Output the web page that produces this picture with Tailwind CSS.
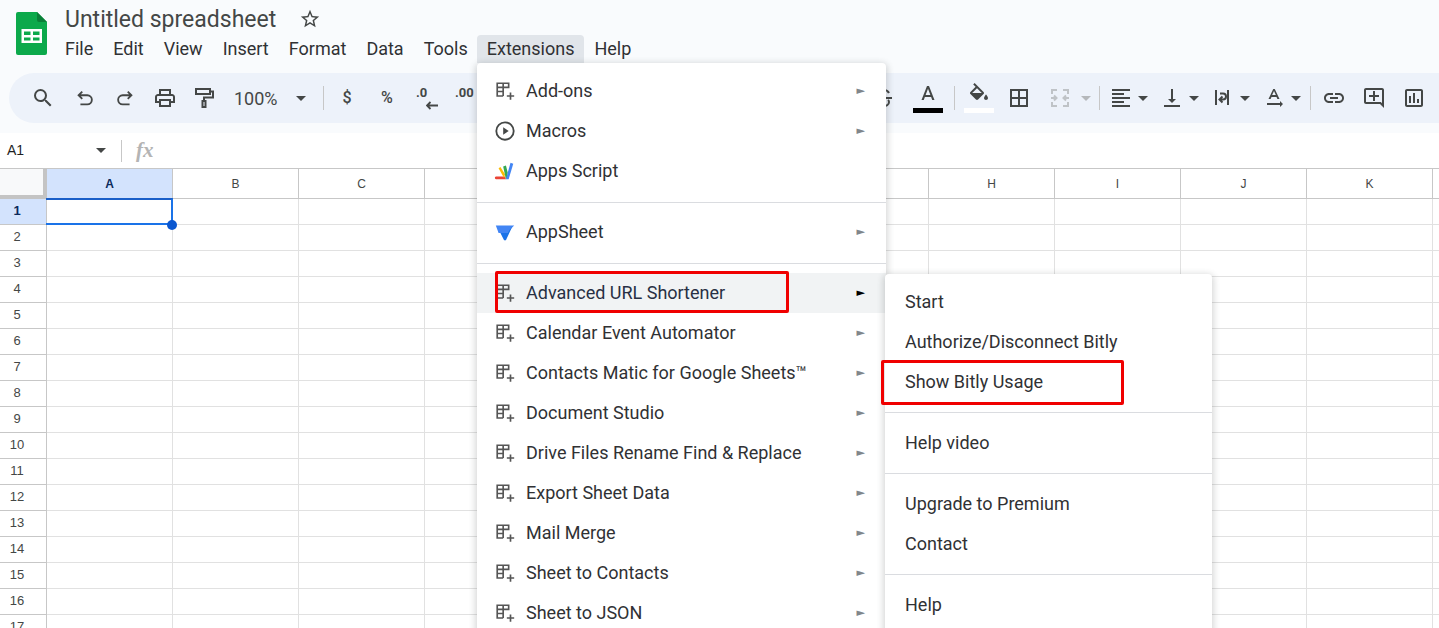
<!DOCTYPE html>
<html lang="en">
<head>
<meta charset="UTF-8">
<title>Untitled spreadsheet</title>
<script src="https://cdn.jsdelivr.net/npm/@tailwindcss/browser@4"></script>
</head>
<body class="bg-white">
<div class="relative w-[1439px] h-[628px] overflow-hidden font-['Roboto',sans-serif] text-[#1f1f1f]">

  <!-- header -->
  <div class="bg-[#f9fbfd] h-[133px]">
    <div class="flex h-[73px]">
      <svg class="ml-[16px] mt-[12px] shrink-0" width="31" height="43" viewBox="0 0 31 43">
        <path d="M2 0h19l10 10v31a2 2 0 0 1-2 2H2a2 2 0 0 1-2-2V2a2 2 0 0 1 2-2z" fill="#0ca94b"/>
        <path d="M21 0l10 10h-8a2 2 0 0 1-2-2z" fill="#0a7f38"/>
        <path d="M5.500 17h20.500v14H5.500z M8 19.500v3.500h6.500v-3.500z M17 19.500v3.500h6.500v-3.500z M8 25.500v3h6.500v-3z M17 25.500v3h6.500v-3z" fill="#fff" fill-rule="evenodd"/>
      </svg>
      <div class="ml-[18px]">
        <div class="flex items-center h-[38px]">
          <span class="text-[23px] text-[#444746] leading-none">Untitled spreadsheet</span>
          <svg class="ml-[23px]" width="22" height="22" viewBox="0 0 24 24" fill="#444746"><path d="M22 9.240l-7.190-.62L12 2 9.190 8.630 2 9.240l5.460 4.730L5.820 21 12 17.270 18.180 21l-1.630-7.030L22 9.240zM12 15.400l-3.760 2.270 1-4.280-3.320-2.880 4.380-.38L12 6.100l1.710 4.040 4.380.38-3.320 2.880 1 4.280L12 15.400z"/></svg>
        </div>
        <div class="flex h-[28px] -mt-[3px] pb-[2px] items-center text-[18px] text-[#303134] relative -left-[10px]">
          <span class="px-[10px]">File</span>
          <span class="px-[10px]">Edit</span>
          <span class="px-[10px]">View</span>
          <span class="px-[10px]">Insert</span>
          <span class="px-[10px]">Format</span>
          <span class="px-[10px]">Data</span>
          <span class="pl-[10px] pr-[9px]">Tools</span>
          <span class="self-start px-[10px] h-[28px] leading-[27px] bg-[#e1e5ea] rounded-t-[4px]">Extensions</span>
          <span class="px-[10px]">Help</span>
        </div>
      </div>
    </div>

    <!-- toolbar -->
    <div class="ml-[9px] h-[50px] bg-[#edf2fa] rounded-l-[25px] flex items-center text-[#444746]">
      <div class="flex items-center pl-[14px]">
        <div class="w-[40px] flex justify-center"><svg width="24" height="24" viewBox="0 0 24 24" fill="#444746"><path d="M15.500 14h-.79l-.28-.27A6.471 6.471 0 0 0 16 9.500 6.500 6.500 0 1 0 9.500 16c1.610 0 3.090-.59 4.230-1.570l.27.28v.79l5 4.990L20.490 19l-4.990-5zm-6 0C7.010 14 5 11.990 5 9.500S7.010 5 9.500 5 14 7.010 14 9.500 11.990 14 9.500 14z"/></svg></div>
        <div class="w-[40px] ml-[2px] flex justify-center"><svg width="22" height="22" viewBox="0 0 24 24" fill="none" stroke="#444746" stroke-width="2"><path d="M9 5L5 9l4 4M5 9h9.500a5 5 0 0 1 0 10H7"/></svg></div>
        <div class="w-[40px] flex justify-center"><svg width="22" height="22" viewBox="0 0 24 24" fill="none" stroke="#444746" stroke-width="2"><path d="M15 5l4 4-4 4M19 9H9.500a5 5 0 0 0 0 10H17"/></svg></div>
        <div class="w-[39px] flex justify-center"><svg width="24" height="24" viewBox="0 0 24 24" fill="#444746"><path d="M19 8h-1V3H6v5H5c-1.660 0-3 1.340-3 3v6h4v4h12v-4h4v-6c0-1.660-1.340-3-3-3zM8 5h8v3H8V5zm8 12v2H8v-4h8v2zm2-2v-2H6v2H4v-4c0-.55.45-1 1-1h14c.55 0 1 .45 1 1v4h-2z"/></svg></div>
        <div class="w-[39px] flex justify-center"><svg width="24" height="24" viewBox="0 0 24 24" fill="none" stroke="#444746" stroke-width="2"><rect x="4" y="3" width="14" height="5"/><path d="M18 5.500h3v6h-9V15"/><rect x="10.500" y="15" width="3" height="6"/></svg></div>
        <span class="ml-[11px] w-[46px] text-[18px] pt-[1px]">100%</span>
        <svg class="ml-[16px]" width="10" height="5" viewBox="0 0 10 5" fill="#444746"><path d="M0 0h10L5 5z"/></svg>
        <div class="ml-[17px] w-px h-[24px] bg-[#c7c7c7]"></div>
        <div class="ml-[3px] w-[40px] text-center text-[16px] font-medium">$</div>
        <div class="w-[40px] text-center text-[16px] font-medium">%</div>
        <div class="w-[39px] relative h-[30px] text-center">
          <span class="absolute left-[9px] top-[0px] text-[13px] font-bold">.0</span>
          <svg class="absolute left-[19px] top-[18px]" width="12" height="9" viewBox="0 0 12 9" fill="none" stroke="#444746" stroke-width="1.800"><path d="M4.500 1L1 4.500 4.500 8M1.500 4.500H12"/></svg>
        </div>
        <div class="w-[40px] relative h-[30px] text-center">
          <span class="absolute left-[9px] top-[0px] text-[13px] font-bold">.00</span>
        </div>
      </div>

      <div class="flex-1"></div>

      <div class="flex items-center pr-[5px]">
        <svg width="24" height="24" viewBox="0 0 24 24" fill="none" stroke="#444746" stroke-width="2"><path d="M17 7c-1-2-3-3-5-3S7 5 7 8c0 1 .5 2 1.500 2.500M4 12h16M16 14c.7.6 1 1.200 1 2 0 3-3 4-5 4s-4-1-5-3"/></svg>
        <div class="ml-[17px] relative w-[30px] h-[30px] flex justify-center">
          <svg width="24" height="24" viewBox="0 0 24 24" fill="#444746"><path d="M11 3L5.500 17h2.250l1.120-3h6.250l1.120 3h2.250L13 3h-2zm-1.380 9L12 5.670 14.380 12H9.620z"/></svg>
          <div class="absolute left-0 bottom-[0px] w-[30px] h-[5px] bg-black"></div>
        </div>
        <div class="ml-[11px] w-px h-[24px] bg-[#c7c7c7]"></div>
        <div class="ml-[9px] relative w-[30px] h-[30px] flex justify-center">
          <svg width="24" height="24" viewBox="0 0 24 24" fill="#444746"><path d="M16.560 8.940L7.620 0 6.210 1.410l2.380 2.380-5.150 5.150c-.59.59-.59 1.540 0 2.120l5.500 5.500c.29.29.68.44 1.060.44s.77-.15 1.060-.44l5.500-5.500c.59-.58.59-1.530 0-2.120zM5.210 10L10 5.210 14.790 10H5.210zM19 11.500s-2 2.170-2 3.500c0 1.100.9 2 2 2s2-.9 2-2c0-1.330-2-3.500-2-3.500z"/><path d="M4.500 10h11l-5.500 6z"/></svg>
          <div class="absolute left-0 bottom-[0px] w-[30px] h-[5px] bg-white"></div>
        </div>
        <svg class="ml-[13px]" width="24" height="24" viewBox="0 0 24 24" fill="#444746"><path d="M3 3v18h18V3H3zm8 16H5v-6h6v6zm0-8H5V5h6v6zm8 8h-6v-6h6v6zm0-8h-6V5h6v6z"/></svg>
        <svg class="ml-[17px]" width="24" height="24" viewBox="0 0 24 24" fill="none" stroke="#bfc3c7" stroke-width="2"><path d="M4 8V4h5M15 4h5v4M4 16v4h5M15 20h5v-4M3 12h5M6 9.500L8.500 12 6 14.500M21 12h-5M18 9.500L15.500 12l2.500 2.500"/></svg>
        <svg class="ml-[9px]" width="10" height="5" viewBox="0 0 10 5" fill="#b5b8bb"><path d="M0 0h10L5 5z"/></svg>
        <div class="ml-[8px] w-px h-[24px] bg-[#c7c7c7]"></div>
        <svg class="ml-[9px]" width="24" height="24" viewBox="0 0 24 24" fill="#444746"><path d="M3 3h18v2H3zM3 7h12v2H3zM3 11h18v2H3zM3 15h12v2H3zM3 19h18v2H3z"/></svg>
        <svg class="ml-[5px]" width="10" height="5" viewBox="0 0 10 5" fill="#444746"><path d="M0 0h10L5 5z"/></svg>
        <svg class="ml-[12px]" width="24" height="24" viewBox="0 0 24 24" fill="#444746"><path d="M16 13h-3V3h-2v10H8l4 4 4-4zM4 19v2h16v-2H4z"/></svg>
        <svg class="ml-[5px]" width="10" height="5" viewBox="0 0 10 5" fill="#444746"><path d="M0 0h10L5 5z"/></svg>
        <svg class="ml-[11px]" width="24" height="24" viewBox="0 0 24 24" fill="none" stroke="#444746" stroke-width="2"><path d="M6 4v15M18 4v15M10 7.500h3a3 3 0 0 1 0 6h-3M12.500 10.500l-3 3 3 3"/></svg>
        <svg class="ml-[6px]" width="10" height="5" viewBox="0 0 10 5" fill="#444746"><path d="M0 0h10L5 5z"/></svg>
        <svg class="ml-[12px]" width="24" height="24" viewBox="0 0 24 24" fill="#444746"><path d="M21 18l-3-3v2H5v2h13v2l3-3zM9.500 11h5l.9 2h2.100L12.750 3h-1.500L6.500 13h2.100l.9-2zm2.500-5.980L13.870 9h-3.740L12 5.020z"/></svg>
        <svg class="ml-[5px]" width="10" height="5" viewBox="0 0 10 5" fill="#444746"><path d="M0 0h10L5 5z"/></svg>
        <div class="ml-[9px] w-px h-[24px] bg-[#c7c7c7]"></div>
        <div class="ml-[3px] w-[40px] flex justify-center"><svg width="24" height="24" viewBox="0 0 24 24" fill="#444746"><path d="M3.900 12c0-1.710 1.390-3.100 3.100-3.100h4V7H7c-2.760 0-5 2.240-5 5s2.240 5 5 5h4v-1.900H7c-1.710 0-3.100-1.390-3.100-3.100zM8 13h8v-2H8v2zm9-6h-4v1.900h4c1.710 0 3.100 1.390 3.100 3.100s-1.390 3.100-3.100 3.100h-4V17h4c2.760 0 5-2.240 5-5s-2.240-5-5-5z"/></svg></div>
        <div class="w-[40px] flex justify-center"><svg width="24" height="24" viewBox="0 0 24 24" fill="#444746"><path d="M22 4c0-1.100-.9-2-2-2H4c-1.100 0-2 .9-2 2v12c0 1.100.9 2 2 2h14l4 4V4zm-2 13.170L18.830 16H4V4h16v13.170zM13 5h-2v4H7v2h4v4h2v-4h4V9h-4z"/></svg></div>
        <div class="w-[40px] flex justify-center"><svg width="24" height="24" viewBox="0 0 24 24" fill="#444746"><path d="M9 17H7v-7h2v7zm4 0h-2V7h2v10zm4 0h-2v-4h2v4zm2 2H5V5h14v14zm0-16H5c-1.100 0-2 .9-2 2v14c0 1.100.9 2 2 2h14c1.100 0 2-.9 2-2V5c0-1.100-.9-2-2-2z"/></svg></div>
      </div>
    </div>
  </div>

  <!-- name box and formula bar -->
  <div class="h-[35px] flex items-center bg-white font-['Liberation_Sans',sans-serif]">
    <span class="ml-[7px] w-[89px] text-[14px] text-[#1f1f1f]">A1</span>
    <svg width="10" height="5" viewBox="0 0 10 5" fill="#444746"><path d="M0 0h10L5 5z"/></svg>
    <div class="ml-[15px] w-px h-[22px] bg-[#c7c7c7]"></div>
    <span class="ml-[14px] font-['Liberation_Serif',serif] italic font-bold text-[21px] text-[#b4b4b4]">fx</span>
  </div>

  <!-- column headers, D to G sit under the menu -->
  <div class="flex h-[31px] border-t border-[#c7c7c7] font-['Liberation_Sans',sans-serif] text-[12px] text-[#444746]">
    <div class="w-[47px] shrink-0 bg-[#f8f9fa] border-r-[4px] border-b-[4px] border-[#c4c4c4]"></div>
    <div class="w-[126px] shrink-0 bg-[#d3e3fd] border-r border-b border-[#c7c7c7] flex items-center justify-center font-bold text-[#0b2a5c]">A</div>
    <div class="w-[126px] shrink-0 border-r border-b border-[#c7c7c7] flex items-center justify-center">B</div>
    <div class="w-[126px] shrink-0 border-r border-b border-[#c7c7c7] flex items-center justify-center">C</div>
    <div class="w-[126px] shrink-0 border-r border-b border-[#c7c7c7]"></div>
    <div class="w-[126px] shrink-0 border-r border-b border-[#c7c7c7]"></div>
    <div class="w-[126px] shrink-0 border-r border-b border-[#c7c7c7]"></div>
    <div class="w-[126px] shrink-0 border-r border-b border-[#c7c7c7]"></div>
    <div class="w-[126px] shrink-0 border-r border-b border-[#c7c7c7] flex items-center justify-center">H</div>
    <div class="w-[126px] shrink-0 border-r border-b border-[#c7c7c7] flex items-center justify-center">I</div>
    <div class="w-[126px] shrink-0 border-r border-b border-[#c7c7c7] flex items-center justify-center">J</div>
    <div class="w-[126px] shrink-0 border-r border-b border-[#c7c7c7] flex items-center justify-center">K</div>
    <div class="w-[126px] shrink-0 border-b border-[#c7c7c7]"></div>
  </div>

  <!-- rows get filled by the script at the bottom -->
  <div id="rows" class="font-['Liberation_Sans',sans-serif] text-[13px] text-[#444746]"></div>

  <!-- active cell -->
  <div class="absolute left-[46px] top-[198px] w-[127px] h-[27px] border-t-2 border-r-2 border-b-2 border-[#1a73e8] border-t-[#1a5fc8]"></div>
  <div class="absolute left-[167px] top-[220px] w-[10px] h-[10px] rounded-full bg-[#0b57d0]"></div>

  <!-- Extensions menu -->
  <div class="absolute left-[477px] top-[63px] w-[409px] h-[600px] bg-white rounded-[4px] shadow-[0_2px_6px_2px_rgba(60,64,67,0.2)] py-[8px] text-[18px] text-[#303134]">
    <div class="h-[40px] flex items-center pl-[17px] pr-[21px]">
      <svg width="22" height="22" viewBox="0 0 24 24" fill="none" stroke="#555" stroke-width="1.800"><path d="M16 9V3.500H3.500v14H10M3.500 8h12.500M3.500 12.500H10M10 3.500v14M18 13.500v8M14 17.500h8"/></svg>
      <span class="ml-[10px] flex-1 pb-[2px]">Add-ons</span><span class="text-[11px] text-[#80868b] font-['DejaVu_Sans']">►</span>
    </div>
    <div class="h-[40px] flex items-center pl-[17px] pr-[21px]">
      <svg width="22" height="22" viewBox="0 0 24 24" fill="none" stroke="#444746" stroke-width="2"><circle cx="12" cy="12" r="9.500"/><path d="M10 8l6 4-6 4z" fill="#444746" stroke="none"/></svg>
      <span class="ml-[10px] flex-1 pb-[2px]">Macros</span><span class="text-[11px] text-[#80868b] font-['DejaVu_Sans']">►</span>
    </div>
    <div class="h-[40px] flex items-center pl-[17px] pr-[21px]">
      <svg width="22" height="22" viewBox="0 0 24 24"><path d="M2 18h10l1 3H3a1.500 1.500 0 0 1-1-3z" fill="#ea4335"/><path d="M5 9l2-1.500 5 8-1 4z" fill="#fbbc04"/><path d="M10 7l3-1 2 8-1 6-1 1z" fill="#34a853"/><path d="M18 3l3 1-5 17h-3z" fill="#4285f4"/></svg>
      <span class="ml-[10px] flex-1 pb-[2px]">Apps Script</span>
    </div>
    <div class="mt-[11px] mb-[9px] h-px bg-[#dadce0]"></div>
    <div class="h-[40px] flex items-center pl-[17px] pr-[21px]">
      <svg width="22" height="22" viewBox="0 0 24 24"><path d="M2 5h20L14 13H5z" fill="#4285f4"/><path d="M7 13h7l6-7-7 15h-2z" fill="#1a73e8"/></svg>
      <span class="ml-[10px] flex-1 pb-[2px]">AppSheet</span><span class="text-[11px] text-[#80868b] font-['DejaVu_Sans']">►</span>
    </div>
    <div class="mt-[11px] mb-[9px] h-px bg-[#dadce0]"></div>
    <div class="h-[40px] flex items-center pl-[17px] pr-[21px] bg-[#f1f3f4]">
      <svg width="22" height="22" viewBox="0 0 24 24" fill="none" stroke="#555" stroke-width="1.800"><path d="M16 9V3.500H3.500v14H10M3.500 8h12.500M3.500 12.500H10M10 3.500v14M18 13.500v8M14 17.500h8"/></svg>
      <span class="ml-[10px] flex-1 pb-[2px] text-[#283044]">Advanced URL Shortener</span><span class="text-[11px] text-black font-['DejaVu_Sans']">►</span>
    </div>
    <div class="h-[40px] flex items-center pl-[17px] pr-[21px]">
      <svg width="22" height="22" viewBox="0 0 24 24" fill="none" stroke="#555" stroke-width="1.800"><path d="M16 9V3.500H3.500v14H10M3.500 8h12.500M3.500 12.500H10M10 3.500v14M18 13.500v8M14 17.500h8"/></svg>
      <span class="ml-[10px] flex-1 pb-[2px]">Calendar Event Automator</span><span class="text-[11px] text-[#80868b] font-['DejaVu_Sans']">►</span>
    </div>
    <div class="h-[40px] flex items-center pl-[17px] pr-[21px]">
      <svg width="22" height="22" viewBox="0 0 24 24" fill="none" stroke="#555" stroke-width="1.800"><path d="M16 9V3.500H3.500v14H10M3.500 8h12.500M3.500 12.500H10M10 3.500v14M18 13.500v8M14 17.500h8"/></svg>
      <span class="ml-[10px] flex-1 pb-[2px]">Contacts Matic for Google Sheets™</span><span class="text-[11px] text-[#80868b] font-['DejaVu_Sans']">►</span>
    </div>
    <div class="h-[40px] flex items-center pl-[17px] pr-[21px]">
      <svg width="22" height="22" viewBox="0 0 24 24" fill="none" stroke="#555" stroke-width="1.800"><path d="M16 9V3.500H3.500v14H10M3.500 8h12.500M3.500 12.500H10M10 3.500v14M18 13.500v8M14 17.500h8"/></svg>
      <span class="ml-[10px] flex-1 pb-[2px]">Document Studio</span><span class="text-[11px] text-[#80868b] font-['DejaVu_Sans']">►</span>
    </div>
    <div class="h-[40px] flex items-center pl-[17px] pr-[21px]">
      <svg width="22" height="22" viewBox="0 0 24 24" fill="none" stroke="#555" stroke-width="1.800"><path d="M16 9V3.500H3.500v14H10M3.500 8h12.500M3.500 12.500H10M10 3.500v14M18 13.500v8M14 17.500h8"/></svg>
      <span class="ml-[10px] flex-1 pb-[2px]">Drive Files Rename Find &amp; Replace</span><span class="text-[11px] text-[#80868b] font-['DejaVu_Sans']">►</span>
    </div>
    <div class="h-[40px] flex items-center pl-[17px] pr-[21px]">
      <svg width="22" height="22" viewBox="0 0 24 24" fill="none" stroke="#555" stroke-width="1.800"><path d="M16 9V3.500H3.500v14H10M3.500 8h12.500M3.500 12.500H10M10 3.500v14M18 13.500v8M14 17.500h8"/></svg>
      <span class="ml-[10px] flex-1 pb-[2px]">Export Sheet Data</span><span class="text-[11px] text-[#80868b] font-['DejaVu_Sans']">►</span>
    </div>
    <div class="h-[40px] flex items-center pl-[17px] pr-[21px]">
      <svg width="22" height="22" viewBox="0 0 24 24" fill="none" stroke="#555" stroke-width="1.800"><path d="M16 9V3.500H3.500v14H10M3.500 8h12.500M3.500 12.500H10M10 3.500v14M18 13.500v8M14 17.500h8"/></svg>
      <span class="ml-[10px] flex-1 pb-[2px]">Mail Merge</span><span class="text-[11px] text-[#80868b] font-['DejaVu_Sans']">►</span>
    </div>
    <div class="h-[40px] flex items-center pl-[17px] pr-[21px]">
      <svg width="22" height="22" viewBox="0 0 24 24" fill="none" stroke="#555" stroke-width="1.800"><path d="M16 9V3.500H3.500v14H10M3.500 8h12.500M3.500 12.500H10M10 3.500v14M18 13.500v8M14 17.500h8"/></svg>
      <span class="ml-[10px] flex-1 pb-[2px]">Sheet to Contacts</span><span class="text-[11px] text-[#80868b] font-['DejaVu_Sans']">►</span>
    </div>
    <div class="h-[40px] flex items-center pl-[17px] pr-[21px]">
      <svg width="22" height="22" viewBox="0 0 24 24" fill="none" stroke="#555" stroke-width="1.800"><path d="M16 9V3.500H3.500v14H10M3.500 8h12.500M3.500 12.500H10M10 3.500v14M18 13.500v8M14 17.500h8"/></svg>
      <span class="ml-[10px] flex-1 pb-[2px]">Sheet to JSON</span><span class="text-[11px] text-[#80868b] font-['DejaVu_Sans']">►</span>
    </div>
  </div>

  <!-- submenu -->
  <div class="absolute left-[885px] top-[274px] w-[327px] h-[400px] bg-white rounded-[4px] shadow-[0_2px_6px_2px_rgba(60,64,67,0.2)] pt-[8px] text-[18px] text-[#303134]">
    <div class="h-[40px] flex items-center pl-[20px] pb-[2px]">Start</div>
    <div class="h-[40px] flex items-center pl-[20px] pb-[2px]">Authorize/Disconnect Bitly</div>
    <div class="h-[40px] flex items-center pl-[20px] pb-[2px]">Show Bitly Usage</div>
    <div class="my-[10px] h-px bg-[#dadce0]"></div>
    <div class="h-[40px] flex items-center pl-[20px] pb-[2px]">Help video</div>
    <div class="my-[10px] h-px bg-[#dadce0]"></div>
    <div class="h-[40px] flex items-center pl-[20px] pb-[2px]">Upgrade to Premium</div>
    <div class="h-[40px] flex items-center pl-[20px] pb-[2px]">Contact</div>
    <div class="my-[10px] h-px bg-[#dadce0]"></div>
    <div class="h-[40px] flex items-center pl-[20px] pb-[2px]">Help</div>
  </div>

  <!-- red annotation boxes -->
  <div class="absolute left-[495px] top-[271px] w-[294px] h-[42px] border-[3px] border-[#f00000] rounded-[2px]"></div>
  <div class="absolute left-[881px] top-[360px] w-[243px] h-[45px] border-[3px] border-[#f00000] rounded-[2px]"></div>
</div>

<script>
  // 17 rows, 12 columns, nothing in them
  var html = '';
  for (var r = 1; r <= 17; r++) {
    var head = r === 1
      ? 'w-[47px] h-[26px] shrink-0 bg-[#d3e3fd] border-r border-b border-[#c7c7c7] flex items-center justify-center pb-[2px] pr-[12px] font-bold text-[#0b2a5c]'
      : 'w-[47px] h-[26px] shrink-0 border-r border-b border-[#c7c7c7] flex items-center justify-center pb-[2px] pr-[12px]';
    html += '<div class="flex"><div class="' + head + '">' + r + '</div>';
    for (var c = 0; c < 12; c++) {
      html += '<div class="w-[126px] h-[26px] shrink-0 border-r border-b border-[#e1e1e1]"></div>';
    }
    html += '</div>';
  }
  document.getElementById('rows').innerHTML = html;
</script>
</body>
</html>
